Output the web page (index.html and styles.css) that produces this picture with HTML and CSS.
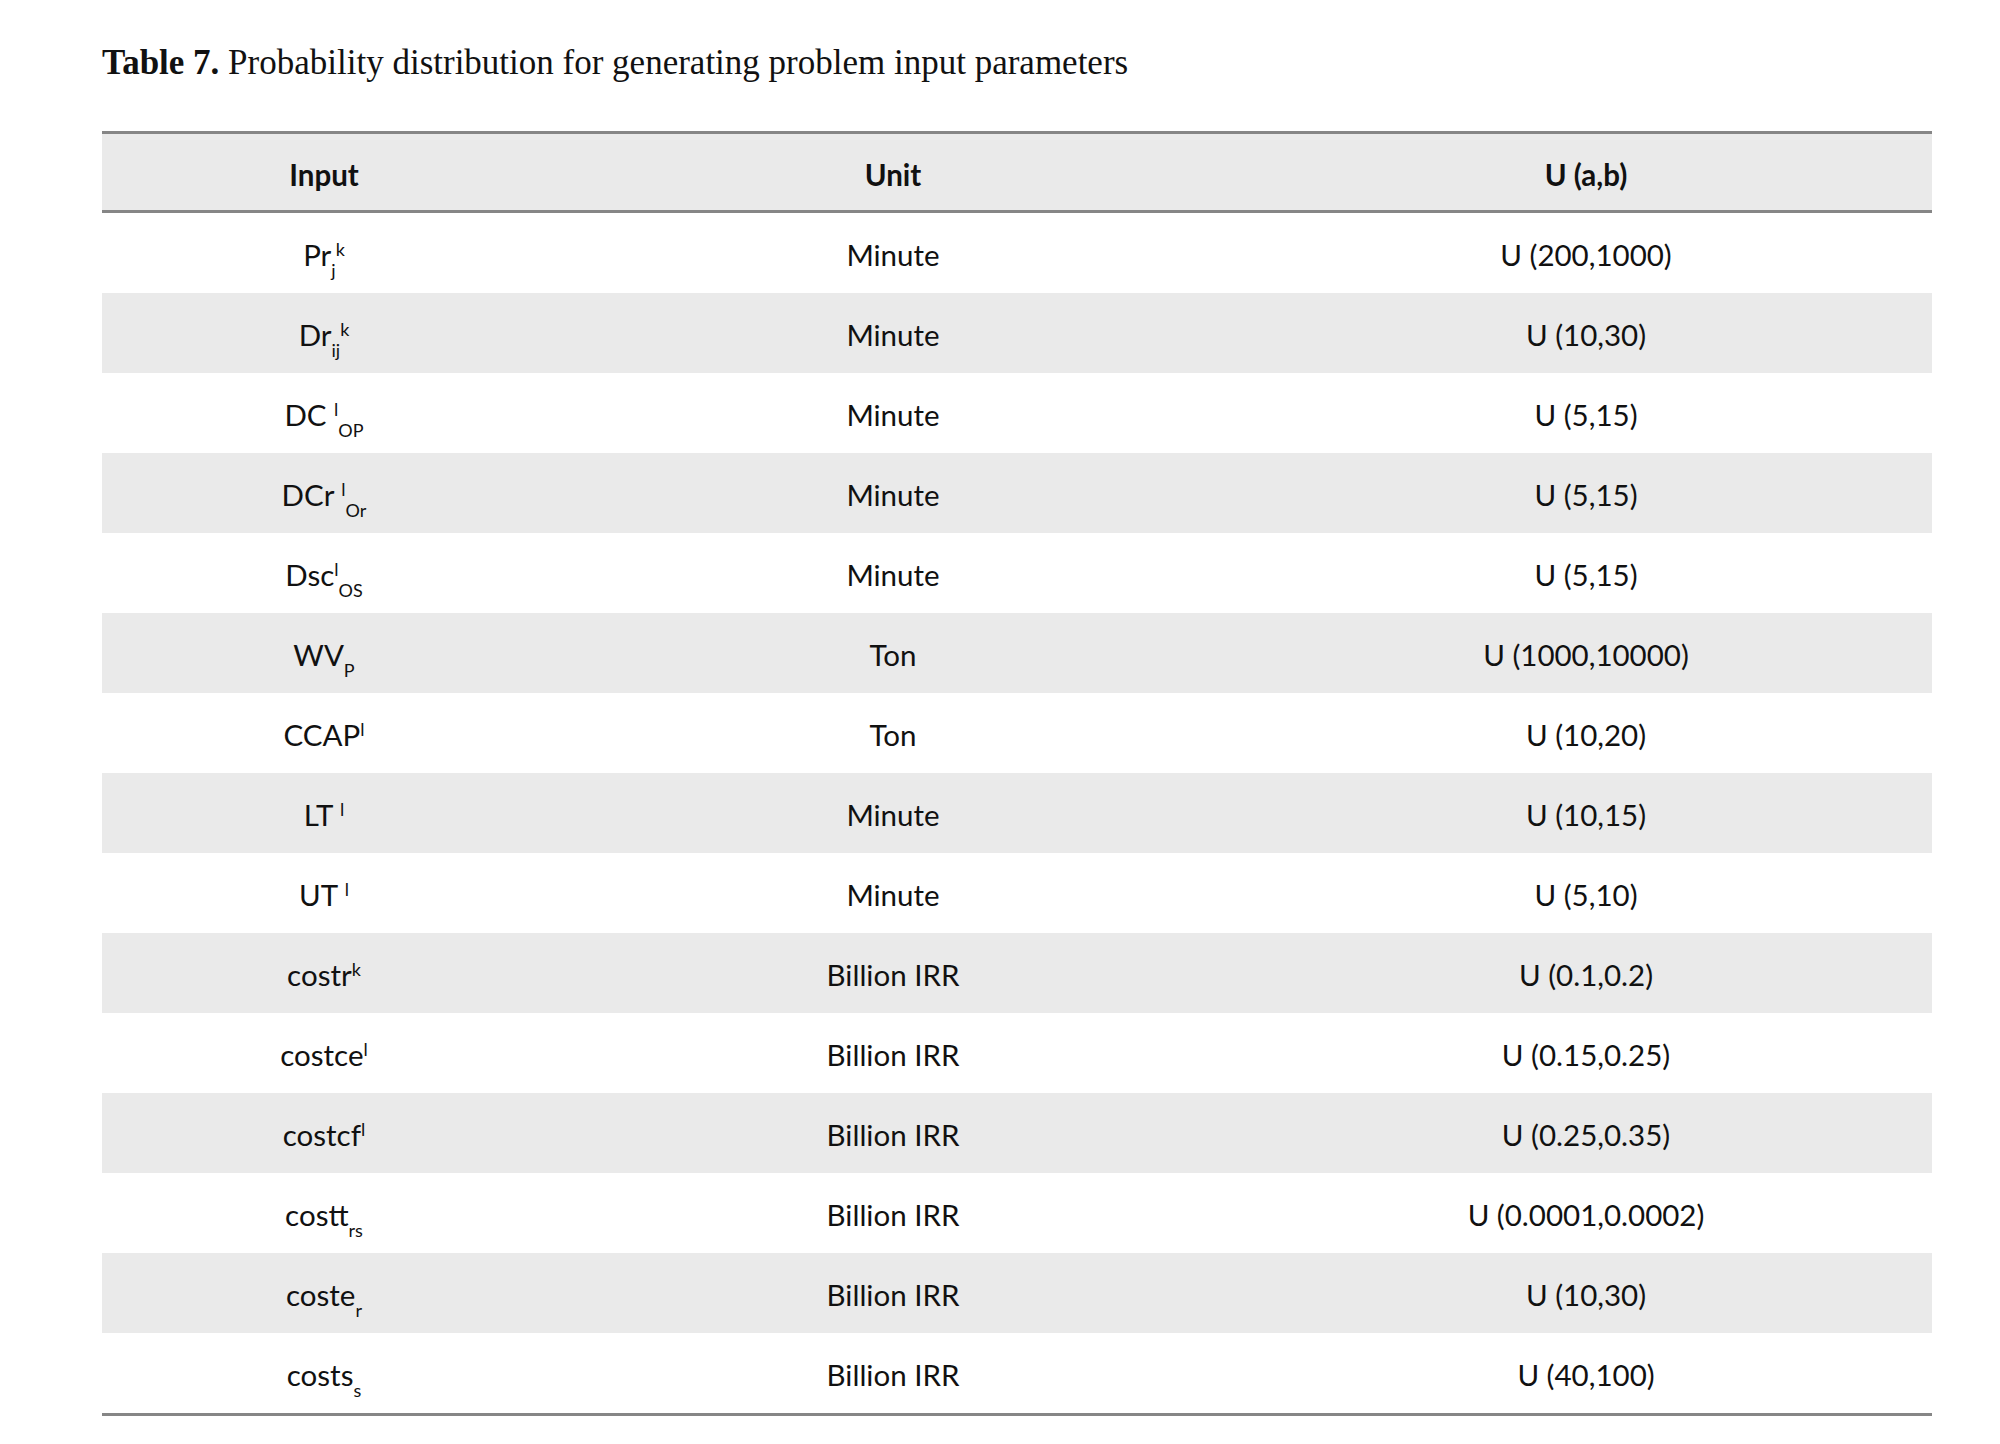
FILE: index.html
```html
<!DOCTYPE html>
<html lang="en">
<head>
<meta charset="utf-8">
<title>Table 7</title>
<link rel="stylesheet" href="styles.css">
</head>
<body>
<div class="page">
  <div class="caption"><span class="cap-label">Table 7.</span> Probability distribution for generating problem input parameters</div>
  <div class="table" role="table">
    <div class="row head" role="row">
      <div class="cell" role="columnheader">Input</div>
      <div class="cell" role="columnheader">Unit</div>
      <div class="cell" role="columnheader">U (a,b)</div>
    </div>
    <div class="row" role="row">
      <div class="cell">Pr<sub>j</sub><sup>k</sup></div>
      <div class="cell">Minute</div>
      <div class="cell">U (200,1000)</div>
    </div>
    <div class="row alt" role="row">
      <div class="cell">Dr<sub>ij</sub><sup>k</sup></div>
      <div class="cell">Minute</div>
      <div class="cell">U (10,30)</div>
    </div>
    <div class="row" role="row">
      <div class="cell">DC <sup>l</sup><sub>OP</sub></div>
      <div class="cell">Minute</div>
      <div class="cell">U (5,15)</div>
    </div>
    <div class="row alt" role="row">
      <div class="cell">DCr <sup>l</sup><sub>Or</sub></div>
      <div class="cell">Minute</div>
      <div class="cell">U (5,15)</div>
    </div>
    <div class="row" role="row">
      <div class="cell">Dsc<sup>l</sup><sub>OS</sub></div>
      <div class="cell">Minute</div>
      <div class="cell">U (5,15)</div>
    </div>
    <div class="row alt" role="row">
      <div class="cell">WV<sub>P</sub></div>
      <div class="cell">Ton</div>
      <div class="cell">U (1000,10000)</div>
    </div>
    <div class="row" role="row">
      <div class="cell">CCAP<sup>l</sup></div>
      <div class="cell">Ton</div>
      <div class="cell">U (10,20)</div>
    </div>
    <div class="row alt" role="row">
      <div class="cell">LT <sup>l</sup></div>
      <div class="cell">Minute</div>
      <div class="cell">U (10,15)</div>
    </div>
    <div class="row" role="row">
      <div class="cell">UT <sup>l</sup></div>
      <div class="cell">Minute</div>
      <div class="cell">U (5,10)</div>
    </div>
    <div class="row alt" role="row">
      <div class="cell">costr<sup>k</sup></div>
      <div class="cell">Billion IRR</div>
      <div class="cell">U (0.1,0.2)</div>
    </div>
    <div class="row" role="row">
      <div class="cell">costce<sup>l</sup></div>
      <div class="cell">Billion IRR</div>
      <div class="cell">U (0.15,0.25)</div>
    </div>
    <div class="row alt" role="row">
      <div class="cell">costcf<sup>l</sup></div>
      <div class="cell">Billion IRR</div>
      <div class="cell">U (0.25,0.35)</div>
    </div>
    <div class="row" role="row">
      <div class="cell">costt<sub>rs</sub></div>
      <div class="cell">Billion IRR</div>
      <div class="cell">U (0.0001,0.0002)</div>
    </div>
    <div class="row alt" role="row">
      <div class="cell">coste<sub>r</sub></div>
      <div class="cell">Billion IRR</div>
      <div class="cell">U (10,30)</div>
    </div>
    <div class="row last" role="row">
      <div class="cell">costs<sub>s</sub></div>
      <div class="cell">Billion IRR</div>
      <div class="cell">U (40,100)</div>
    </div>
  </div>
</div>
</body>
</html>
```

FILE: styles.css
```css
html, body {
  margin: 0;
  padding: 0;
  background: #ffffff;
}

.page {
  padding: 43px 0 0 102px;
}

.caption {
  font-family: "Liberation Serif", "Times New Roman", serif;
  font-size: 35px;
  line-height: 40px;
  height: 40px;
  color: #111111;
  white-space: nowrap;
}

.cap-label {
  font-weight: bold;
}

.table {
  margin-top: 48px;
  width: 1830px;
  font-family: Lato, "Open Sans", sans-serif;
  font-size: 29.5px;
  color: #111111;
}

.row {
  display: grid;
  grid-template-columns: 444px 694px 692px;
  align-items: center;
  height: 80px;
  padding-top: 3px;
  box-sizing: border-box;
}

.row.alt {
  background: #eaeaea;
}

.row.head {
  background: #eaeaea;
  height: 82px;
  border-top: 3px solid #868686;
  border-bottom: 3px solid #868686;
  padding-top: 4px;
  font-weight: bold;
}

.row.last {
  height: 83px;
  border-bottom: 3px solid #868686;
  padding-top: 3px;
}

.cell {
  text-align: center;
  line-height: 35px;
  white-space: nowrap;
}

sub, sup {
  font-size: 18px;
  line-height: 0;
}

sup {
  vertical-align: 10px;
}

sub {
  vertical-align: -11px;
}
```
